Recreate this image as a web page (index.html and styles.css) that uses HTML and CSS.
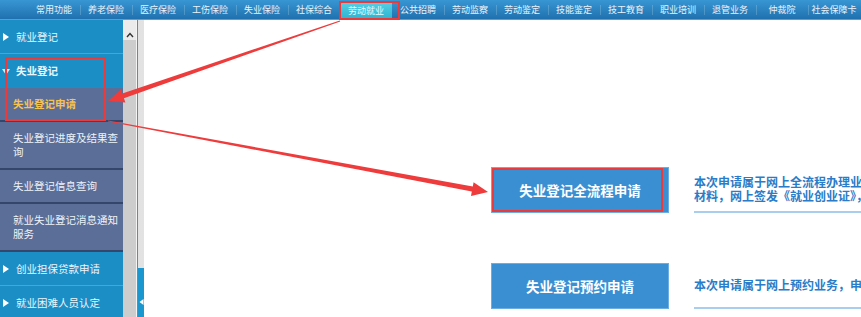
FILE: index.html
```html
<!DOCTYPE html>
<html lang="zh-CN">

<head>
    <meta charset="UTF-8">
    <meta name="viewport" content="width=device-width, initial-scale=1.0">
    <title>劳动就业 - 失业登记</title>
    <link rel="stylesheet" href="styles.css">
</head>

<body>
    <div class="topbar">
        <ul class="nav">
            <li>常用功能</li>
            <li>养老保险</li>
            <li>医疗保险</li>
            <li>工伤保险</li>
            <li>失业保险</li>
            <li>社保综合</li>
            <li class="active">劳动就业</li>
            <li>公共招聘</li>
            <li>劳动监察</li>
            <li>劳动鉴定</li>
            <li>技能鉴定</li>
            <li>技工教育</li>
            <li>职业培训</li>
            <li>退管业务</li>
            <li>仲裁院</li>
            <li>社会保障卡</li>
        </ul>
    </div>

    <div class="main">
        <ul class="sidebar">
            <li class="group">就业登记</li>
            <li class="group open">失业登记</li>
            <li class="sub current">失业登记申请</li>
            <li class="sub">失业登记进度及结果查询</li>
            <li class="sub">失业登记信息查询</li>
            <li class="sub">就业失业登记消息通知服务</li>
            <li class="group">创业担保贷款申请</li>
            <li class="group">就业困难人员认定</li>
        </ul>

        <div class="scrollbar">
            <div class="scroll-top">
                <svg width="8" height="6" viewBox="0 0 8 6"><polyline points="1,5 4,1.5 7,5" fill="none" stroke="#333" stroke-width="1.4"/></svg>
            </div>
        </div>

        <div class="splitter">
            <div class="handle">
                <svg width="5" height="6" viewBox="0 0 5 6"><polygon points="4.5,0 4.5,6 0.5,3" fill="#fff"/></svg>
            </div>
        </div>

        <div class="content">
            <div class="apply-row">
                <a class="apply-btn" href="#">失业登记全流程申请</a>
                <div class="apply-desc">
                    <p>本次申请属于网上全流程办理业务，申请人无需到经办机构提交纸质</p>
                    <p>材料，网上签发《就业创业证》，办理结果可在线查询。</p>
                </div>
            </div>
            <div class="apply-row">
                <a class="apply-btn" href="#">失业登记预约申请</a>
                <div class="apply-desc">
                    <p>本次申请属于网上预约业务，申请人需按预约时间到经办机构现场办理。</p>
                </div>
            </div>
        </div>
    </div>

    <!-- annotation marks drawn over the screenshot -->
    <svg class="marks" width="861" height="317" viewBox="0 0 861 317">
        <g fill="none" stroke="#ec3a3a" stroke-width="2">
            <rect x="340" y="2" width="59" height="17"/>
            <rect x="6" y="58" width="99" height="62"/>
            <rect x="493" y="169" width="169" height="42"/>
        </g>
        <g fill="#ee3b3b">
            <polygon points="340.2,21.5 123.9,98.2 125.4,102.4 108,101 120.8,89.2 122.3,93.4 339.8,20.5"/>
            <polygon points="108.1,120.5 472.8,186.6 473.6,182.2 488,192 471,195.9 471.8,191.5 107.9,121.5"/>
        </g>
    </svg>
</body>

</html>
```

FILE: styles.css
```css
body {
    margin: 0;
    width: 861px;
    height: 317px;
    overflow: hidden;
    position: relative;
    font-family: "Noto Sans CJK SC", "Noto Sans", sans-serif;
    background-color: #fff;
}

ul {
    list-style: none;
    margin: 0;
    padding: 0;
}

p {
    margin: 0;
}

/* top menu */
.topbar {
    height: 19px;
    background: linear-gradient(#3896d3, #1f71ae);
    border-bottom: 1px solid #4ea3d6;
}

.nav {
    display: flex;
    padding-left: 28px;
    height: 100%;
}

.nav li {
    width: 52px;
    flex-shrink: 0;
    display: flex;
    align-items: center;
    justify-content: center;
    font-size: 9px;
    color: #eaf3fa;
    position: relative;
}

.nav li + li::before {
    content: "";
    position: absolute;
    left: 0;
    top: 5px;
    height: 10px;
    border-left: 1px solid rgba(255, 255, 255, 0.18);
}

.nav li.active {
    background: linear-gradient(#58cfe4, #2fb6d2);
    margin: 2px 0 1px;
    color: #e8fbff;
}

.nav li.active::before,
.nav li.active + li::before {
    display: none;
}

/* layout */
.main {
    display: flex;
    height: 297px;
    overflow: hidden;
}

/* left menu */
.sidebar {
    width: 123px;
    flex-shrink: 0;
    background-color: #1b8ec6;
    font-size: 10.5px;
}

.sidebar li {
    color: #eef4f9;
    line-height: 14px;
}

.group {
    height: 33px;
    display: flex;
    align-items: center;
    padding-left: 16px;
    border-bottom: 1px solid #43a7d8;
    position: relative;
}

.group::before {
    content: "";
    position: absolute;
    left: 3px;
    top: 13px;
    border-left: 6px solid #fff;
    border-top: 4px solid transparent;
    border-bottom: 4px solid transparent;
}

.group.open {
    font-weight: bold;
    border-bottom: none;
    height: 34px;
}

.group.open::before {
    left: 2px;
    top: 15px;
    border-top: 6px solid #dfe9f2;
    border-left: 4px solid transparent;
    border-right: 4px solid transparent;
    border-bottom: none;
}

.sub {
    background-color: #5a6e98;
    padding: 9px 2px 9px 13px;
    min-height: 14px;
    border-bottom: 2px solid #34466a;
    color: #e6ebf3;
}

.sub.current {
    color: #f6c34f;
    font-weight: bold;
}

/* scrollbar and splitter */
.scrollbar {
    width: 13px;
    flex-shrink: 0;
    background-color: #cdcdcd;
    border-right: 1px solid #f4f4f4;
}

.scroll-top {
    height: 20px;
    background-color: #ebebeb;
    display: flex;
    justify-content: center;
    align-items: flex-end;
    padding-bottom: 2px;
    box-sizing: border-box;
}

.splitter {
    width: 6px;
    flex-shrink: 0;
    border-left: 1px solid #2a9de0;
    background-color: #ececec;
    background-image: radial-gradient(#d6d6d6 0.6px, transparent 0.8px);
    background-size: 2px 2px;
    display: flex;
    flex-direction: column;
}

.handle {
    margin-top: auto;
    height: 49px;
    background-color: #1b97cf;
    display: flex;
    justify-content: center;
    padding-top: 31px;
    box-sizing: border-box;
}

/* content */
.content {
    flex: 1;
    padding: 147px 0 0 347px;
    min-width: 0;
    overflow: hidden;
}

.apply-row {
    display: flex;
    margin-bottom: 50px;
}

.apply-btn {
    width: 178px;
    height: 46px;
    flex-shrink: 0;
    display: flex;
    align-items: center;
    justify-content: center;
    background-color: #3a8fd2;
    border: 1px solid #6aaee2;
    box-sizing: border-box;
    color: #fff;
    font-size: 13.5px;
    font-weight: bold;
    text-decoration: none;
}

.apply-desc {
    margin-left: 25px;
    height: 46px;
    flex: 1;
    display: flex;
    flex-direction: column;
    justify-content: center;
    border-bottom: 2px solid #a9cdef;
    box-sizing: border-box;
    color: #2b7cc8;
    font-size: 12px;
    font-weight: bold;
    line-height: 14px;
    white-space: nowrap;
}

/* red annotation overlay */
.marks {
    position: absolute;
    top: 0;
    left: 0;
    pointer-events: none;
}
```
